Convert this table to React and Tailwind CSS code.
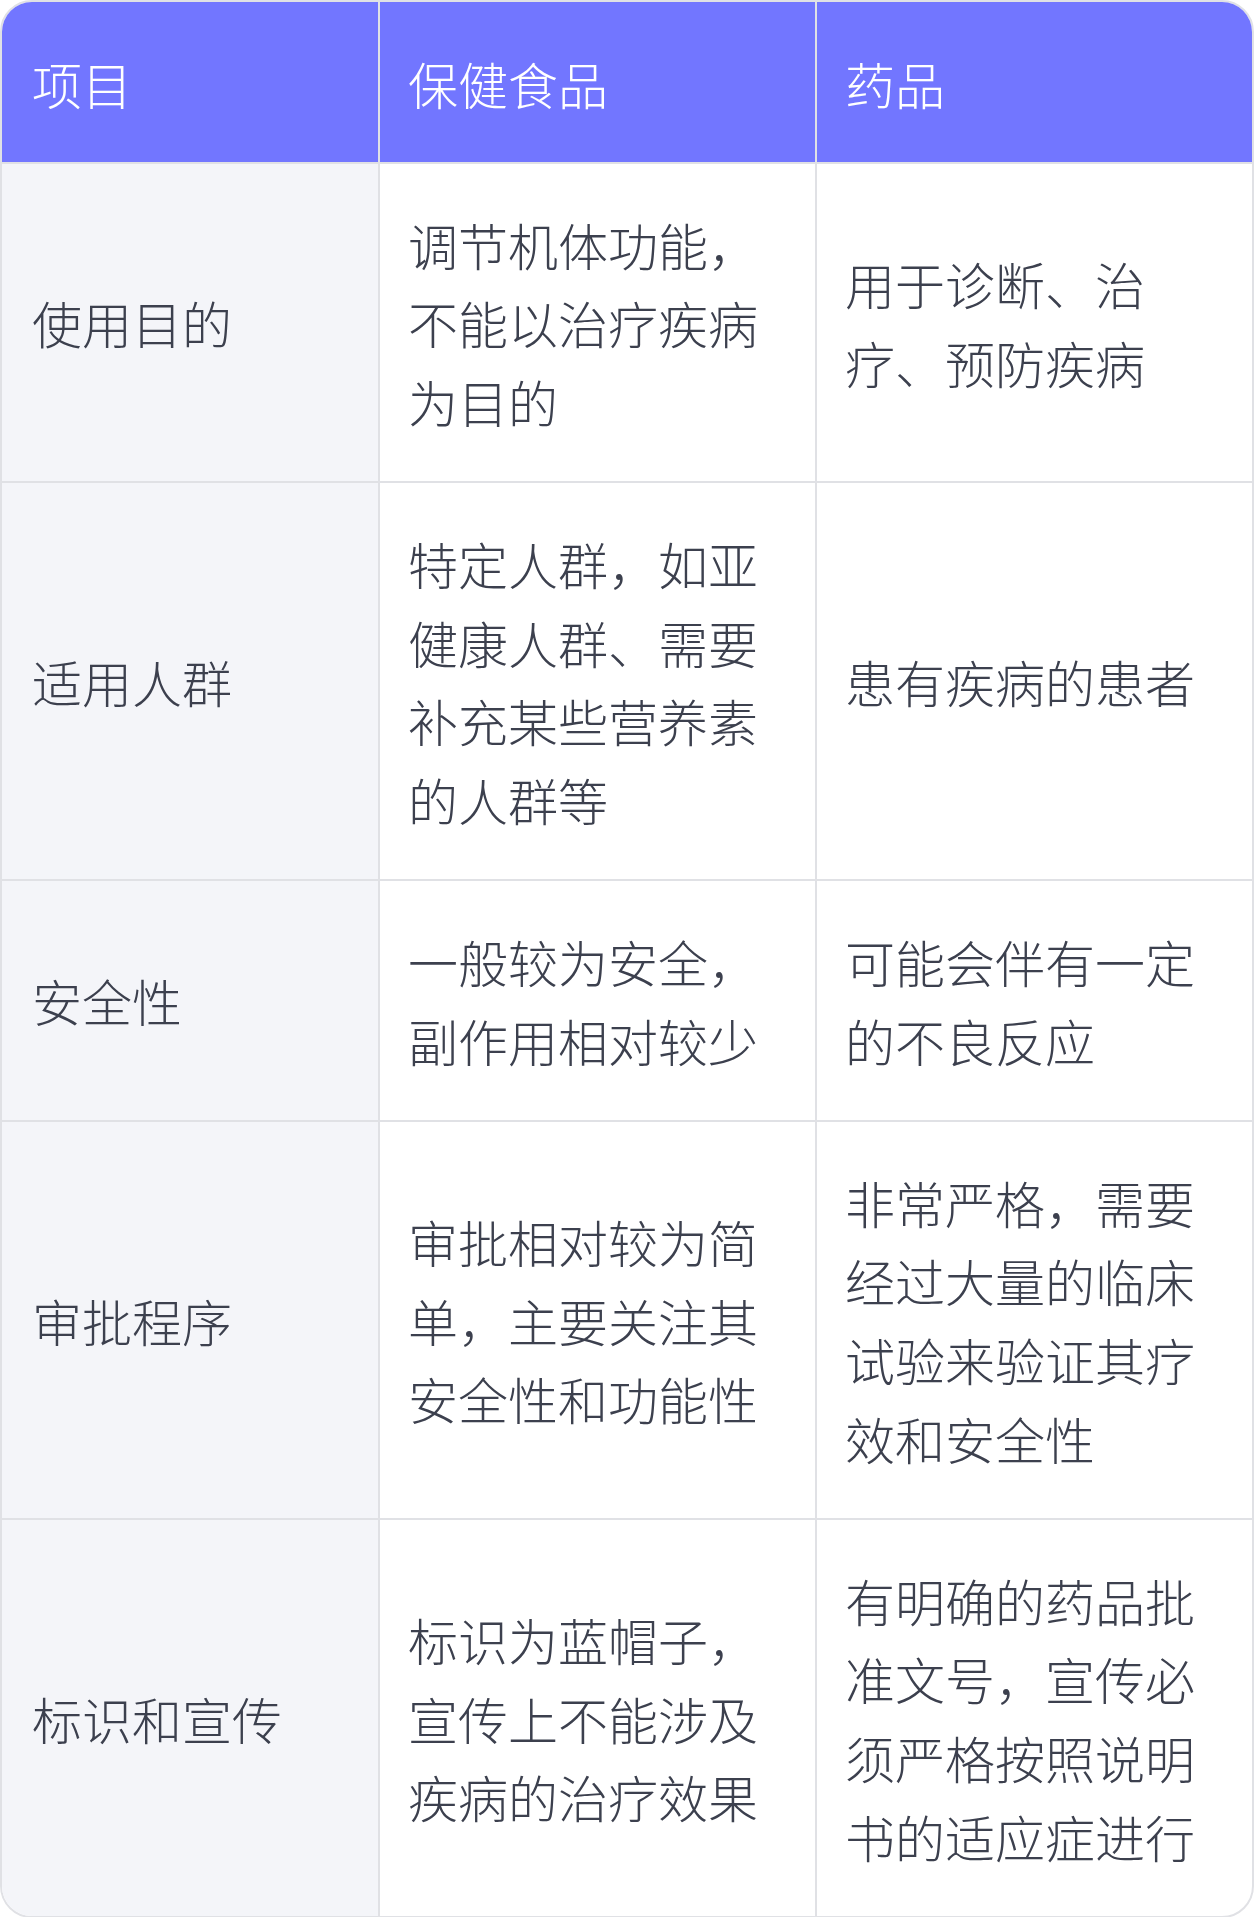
import React from 'react';

const rows = [
  ['使用目的', '调节机体功能，不能以治疗疾病为目的', '用于诊断、治疗、预防疾病'],
  ['适用人群', '特定人群，如亚健康人群、需要补充某些营养素的人群等', '患有疾病的患者'],
  ['安全性', '一般较为安全，副作用相对较少', '可能会伴有一定的不良反应'],
  ['审批程序', '审批相对较为简单，主要关注其安全性和功能性', '非常严格，需要经过大量的临床试验来验证其疗效和安全性'],
  ['标识和宣传', '标识为蓝帽子，宣传上不能涉及疾病的治疗效果', '有明确的药品批准文号，宣传必须严格按照说明书的适应症进行'],
];

const App = () => {
  return (
    <div
      className="w-[1254px] bg-white"
      style={{ fontFamily: '"Noto Sans CJK SC", "Noto Sans", sans-serif' }}
    >
      <div className="rounded-[32px] border-2 border-[#e0e1e5] overflow-hidden">
        {/* 表头 */}
        <div className="grid grid-cols-[378px_437px_435px] bg-[#7276ff] text-white text-[50px] font-light leading-[78.67px] border-b-2 border-[#e0e1e5]">
          <div className="pl-[30px] pr-[28px] pt-[42px] pb-[39.33px] border-r-2 border-[#e0e1e5]">项目</div>
          <div className="px-[28px] pt-[42px] pb-[39.33px] border-r-2 border-[#e0e1e5]">保健食品</div>
          <div className="px-[28px] pt-[42px] pb-[39.33px]">药品</div>
        </div>

        {rows.map((row, i) => (
          <div
            key={i}
            className={
              'grid grid-cols-[378px_437px_435px] text-[#3c404e] text-[50px] font-light leading-[78.67px] ' +
              (i < rows.length - 1 ? 'border-b-2 border-[#e0e1e5]' : '')
            }
          >
            <div className="flex items-center pl-[30px] pr-[28px] py-[40.67px] bg-[#f4f5f9] border-r-2 border-[#e0e1e5]">
              {row[0]}
            </div>
            <div className="flex items-center px-[28px] py-[40.67px] border-r-2 border-[#e0e1e5]">
              <div>{row[1]}</div>
            </div>
            <div className="flex items-center px-[28px] py-[40.67px]">
              <div>{row[2]}</div>
            </div>
          </div>
        ))}
      </div>
    </div>
  );
};

export default App;
